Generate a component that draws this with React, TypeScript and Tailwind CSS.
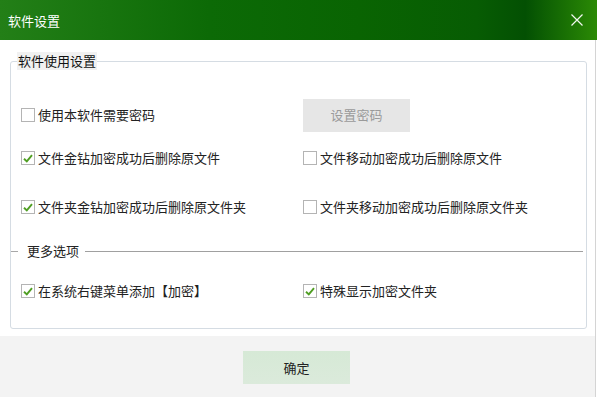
const font = { fontFamily: '"Noto Sans CJK SC", "Noto Sans", sans-serif' };

const CheckBox = ({ checked, label }: { checked: boolean; label: string }) => (
  <label className="flex items-center h-[20px] text-[13px] text-[#222] select-none">
    <span className="w-[14px] h-[14px] border border-[#b4b4b4] bg-white flex items-center justify-center shrink-0">
      {checked && (
        <svg width="10" height="9" viewBox="0 0 10 9">
          <path d="M1 4.8 L3.8 7.4 L9 1.2" fill="none" stroke="#4f9e22" strokeWidth="1.9" />
        </svg>
      )}
    </span>
    <span className="ml-[3px] leading-[20px]">{label}</span>
  </label>
);

export default function App() {
  return (
    <div className="w-[597px] h-[397px] bg-white flex flex-col overflow-hidden" style={font}>
      <div className="h-[40px] shrink-0 flex items-center justify-between pl-[8px] pr-[14px] bg-[linear-gradient(90deg,#237f17_0%,#0c6a06_35%,#096402_60%,#075c03_80%,#035003_88%,#2b8a05_100%)]">
        <span className="text-white text-[13px] leading-none">软件设置</span>
        <svg width="12" height="12" viewBox="0 0 12 12">
          <path d="M0.5 0.5 L11.5 11.5 M11.5 0.5 L0.5 11.5" stroke="#f2f7f0" strokeWidth="1.2" />
        </svg>
      </div>

      <div className="flex-1 flex flex-col border-r border-[#d4d4d4] mr-[1px]">
        <div className="h-[296px] shrink-0 pt-[12px]">
          <fieldset className="ml-[10px] mr-[8px] border border-[#d5dce3] rounded-[3px] h-[277px] px-0 pb-0">
            <legend className="ml-[6px] px-[1px] bg-[#f1f1f1] text-[13px] leading-[18px] text-[#111]">
              软件使用设置
            </legend>
            <div className="pl-[10px] pt-[28px]">
              <div className="grid grid-cols-[282px_1fr] items-center h-[34px]">
                <CheckBox checked={false} label="使用本软件需要密码" />
                <button className="w-[107px] h-[33px] bg-[#e6e6e6] text-[#9a9a9a] text-[13px]">设置密码</button>
              </div>
              <div className="grid grid-cols-[282px_1fr] mt-[16px]">
                <CheckBox checked label="文件金钻加密成功后删除原文件" />
                <CheckBox checked={false} label="文件移动加密成功后删除原文件" />
              </div>
              <div className="grid grid-cols-[282px_1fr] mt-[29px]">
                <CheckBox checked label="文件夹金钻加密成功后删除原文件夹" />
                <CheckBox checked={false} label="文件夹移动加密成功后删除原文件夹" />
              </div>
            </div>
            <div className="flex items-center h-[20px] mt-[24px] pr-[3px]">
              <span className="w-[7px] h-px bg-[#a8a8a8]" />
              <span className="ml-[9px] mr-[6px] text-[13px] text-[#222]">更多选项</span>
              <span className="flex-1 h-px bg-[#a0a0a0]" />
            </div>
            <div className="pl-[10px] grid grid-cols-[282px_1fr] mt-[20px]">
              <CheckBox checked label="在系统右键菜单添加【加密】" />
              <CheckBox checked label="特殊显示加密文件夹" />
            </div>
          </fieldset>
        </div>
        <div className="flex-1 bg-[#f3f3f3] flex justify-center pt-[15px] pr-[2px]">
          <button className="w-[107px] h-[33px] bg-[linear-gradient(180deg,#d6e9d6,#dbeadb)] text-[13px] text-[#222]">确定</button>
        </div>
      </div>
    </div>
  );
}
